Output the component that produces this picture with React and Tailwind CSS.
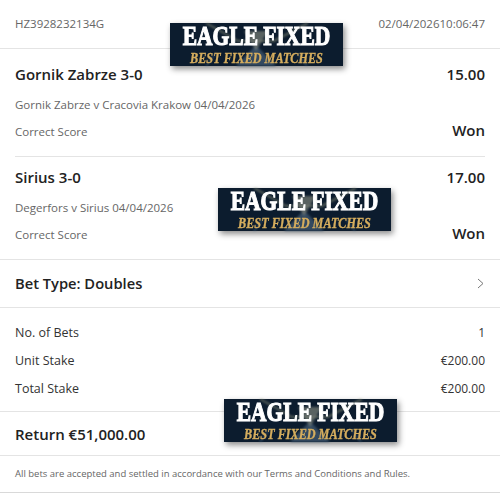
const Banner = ({ className }) => (
    <div className={`absolute w-[173px] h-[43px] bg-[#0c1c2e] shadow-[2px_3px_6px_rgba(0,0,0,0.45)] flex flex-col items-center ${className}`}>
        <svg className="absolute inset-0 blur-[1px]" width="173" height="43" viewBox="0 0 173 43" fill="none">
            <path d="M36 0 L68 18 L104 18 L138 0" stroke="#8a8f78" strokeWidth="2" opacity="0.6" />
            <path d="M66 43 L86 22 L106 43" fill="#3d556d" opacity="0.8" />
            <path d="M36 43 L46 30 M137 43 L127 30" stroke="#4a6a88" strokeWidth="1.2" opacity="0.8" />
            <path d="M74 8 L86 28 L98 8 Z" fill="#7b8078" opacity="0.7" />
        </svg>
        <div className="relative mt-[3px] leading-none text-[21.5px] font-bold text-white font-['Liberation_Serif',serif] [-webkit-text-stroke:0.9px_white] scale-y-[1.25] whitespace-nowrap blur-[0.3px]">
            EAGLE FIXED
        </div>
        <div className="relative mt-[4px] leading-none text-[12.2px] font-bold italic text-[#d5ad5e] font-['Liberation_Serif',serif] [-webkit-text-stroke:0.3px_#d5ad5e] scale-y-[1.15] whitespace-nowrap blur-[0.3px]">
            BEST FIXED MATCHES
        </div>
    </div>
);

const Selection = ({ title, odds, match, className }) => (
    <div className={`mx-[15px] flex flex-col ${className}`}>
        <div className="flex justify-between items-center h-[24px] text-[#222] text-[15px] font-semibold">
            <span>{title}</span>
            <span>{odds}</span>
        </div>
        <div className="mt-[7px] h-[24px] leading-[24px] text-[11.5px] text-[#666]">{match}</div>
        <div className="mt-[3px] flex justify-between items-center h-[24px]">
            <span className="text-[11.5px] text-[#666]">Correct Score</span>
            <span className="text-[15px] font-semibold text-[#222] mb-[4px]">Won</span>
        </div>
    </div>
);

const StakeRow = ({ label, value }) => (
    <div className="flex justify-between items-center h-[28px] text-[12.5px] text-[#333]">
        <span>{label}</span>
        <span className="text-[12px]">{value}</span>
    </div>
);

export default function App() {
    return (
        <div className="relative w-[500px] h-[493px] overflow-hidden bg-white font-['Open_Sans','Noto_Sans',sans-serif]">
            <div className="flex justify-between items-center h-[49px] px-[15px] border-b border-[#e4e4e4] text-[11.5px] text-[#666]">
                <span>HZ3928232134G</span>
                <span>02/04/202610:06:47</span>
            </div>

            <Selection
                title="Gornik Zabrze 3-0"
                odds="15.00"
                match="Gornik Zabrze v Cracovia Krakow 04/04/2026"
                className="pt-[13px] h-[108px] border-b border-[#e4e4e4]"
            />
            <div className="h-[103px] border-b border-[#e4e4e4]">
                <Selection
                    title="Sirius 3-0"
                    odds="17.00"
                    match="Degerfors v Sirius 04/04/2026"
                    className="pt-[8px]"
                />
            </div>

            <div className="flex justify-between items-center h-[48px] px-[15px] border-b border-[#e4e4e4]">
                <span className="text-[14.7px] font-semibold text-[#222]">Bet Type: Doubles</span>
                <svg width="7" height="11" viewBox="0 0 7 11" fill="none" className="mr-[1px]">
                    <path d="M1 1 L6 5.5 L1 10" stroke="#777" strokeWidth="1" />
                </svg>
            </div>

            <div className="px-[15px] h-[104px] pt-[11px] border-b border-[#e4e4e4]">
                <StakeRow label="No. of Bets" value="1" />
                <StakeRow label="Unit Stake" value="€200.00" />
                <StakeRow label="Total Stake" value="€200.00" />
            </div>

            <div className="flex items-center h-[44px] pt-[1px] px-[15px] border-b border-[#e4e4e4] text-[15px] font-semibold text-[#222]">
                Return €51,000.00
            </div>

            <div className="flex items-center h-[37px] pt-[1px] px-[15px] border-b border-[#d9d9d9] text-[9.5px] text-[#666]">
                All bets are accepted and settled in accordance with our Terms and Conditions and Rules.
            </div>

            <Banner className="left-[170px] top-[23px]" />
            <Banner className="left-[218px] top-[188px]" />
            <Banner className="left-[224px] top-[399px]" />
        </div>
    );
}
